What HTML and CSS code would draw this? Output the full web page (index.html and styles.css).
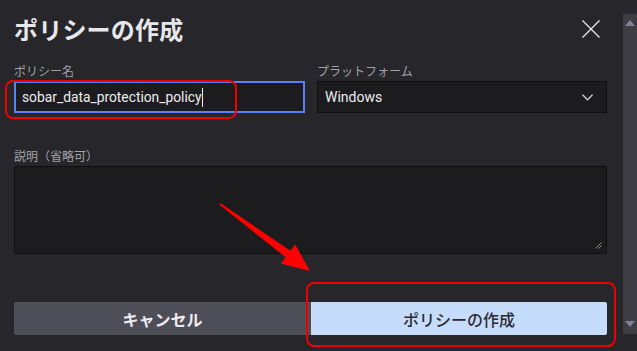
FILE: index.html
```html
<!DOCTYPE html>
<html lang="ja">
<head>
<meta charset="utf-8">
<link rel="stylesheet" href="styles.css">
</head>
<body>
<div class="page">
  <div class="dialog">
    <div class="header">
      <h1 class="title">ポリシーの作成</h1>
      <button class="close" aria-label="閉じる">
        <svg width="18" height="18" viewBox="0 0 18 18"><path d="M0.5 0.5L17.5 17.5M17.5 0.5L0.5 17.5" stroke="#e8e8ea" stroke-width="1.3" fill="none"/></svg>
      </button>
    </div>
    <div class="fields">
      <div class="field">
        <label class="label">ポリシー名</label>
        <div class="input focused"><span>sobar_data_protection_policy</span><span class="caret"></span></div>
      </div>
      <div class="field">
        <label class="label">プラットフォーム</label>
        <div class="input select"><span>Windows</span>
          <svg class="chev" width="11" height="7" viewBox="0 0 11 7"><path d="M0.5 0.8L5.5 5.8L10.5 0.8" stroke="#d0d0d4" stroke-width="1.3" fill="none"/></svg>
        </div>
      </div>
    </div>
    <div class="field desc">
      <label class="label">説明（省略可）</label>
      <div class="textarea">
        <svg class="grip" width="7" height="7" viewBox="0 0 7 7"><path d="M6.5 0.5L0.5 6.5M6.5 3.5L3.5 6.5" stroke="#8a8a90" stroke-width="1" fill="none"/></svg>
      </div>
    </div>
    <div class="actions">
      <button class="btn cancel">キャンセル</button>
      <button class="btn primary">ポリシーの作成</button>
    </div>
  </div>
  <div class="scrollbar">
    <span class="arrow up"></span>
    <span class="arrow down"></span>
  </div>
</div>
<div class="mark mark-input"></div>
<div class="mark mark-button"></div>
<svg class="pointer" width="637" height="351" viewBox="0 0 637 351">
  <polygon points="219.4,204.8 220.6,203.2 290.4,250.8 295.2,244.4 310,271 280.8,263.6 285.6,257.2" fill="#f00"/>
</svg>
</body>
</html>
```
FILE: styles.css
```css
html, body {
  margin: 0;
  padding: 0;
  background: #26262b;
  font-family: "Noto Sans CJK JP", "Noto Sans", sans-serif;
  color: #e6e6e9;
}
.page {
  width: 637px;
  height: 351px;
  display: flex;
  background: #26262b;
  box-sizing: border-box;
}
.dialog {
  width: 623px;
  box-sizing: border-box;
  padding: 0 16px 0 14px;
  display: flex;
  flex-direction: column;
}
.header {
  display: flex;
  align-items: center;
  justify-content: space-between;
  height: 58px;
}
.title {
  margin: -1px 0 0 0;
  font-size: 24px;
  font-weight: 700;
  line-height: 32px;
  color: #e8e8ea;
  letter-spacing: 0.2px;
}
.close {
  background: none;
  border: 0;
  padding: 0;
  margin-right: 7px;
  width: 18px;
  height: 18px;
  display: block;
}
.close svg { display: block; }
.fields {
  display: grid;
  grid-template-columns: 291px 290px;
  column-gap: 12px;
}
.field {
  display: flex;
  flex-direction: column;
}
.label {
  font-size: 12px;
  line-height: 16px;
  color: #a3a3a9;
  margin-top: 5px;
  margin-bottom: 2px;
}
.input {
  height: 32px;
  box-sizing: border-box;
  background: #1c1c1f;
  border: 1px solid #101012;
  display: flex;
  align-items: center;
  padding: 0 7px;
  font-family: Roboto, "Noto Sans CJK JP", sans-serif;
  font-size: 14px;
  color: #ececee;
}
.input.focused {
  border: 2px solid #5b7ff5;
  padding: 0 6px;
  font-size: 13.8px;
}
.caret {
  width: 1px;
  height: 19px;
  background: #f0f0f0;
  margin-left: 0;
}
.select {
  justify-content: space-between;
  padding-right: 13px;
}
.chev { display: block; }
.desc .label {
  margin-top: 35px;
}
.textarea {
  height: 88px;
  box-sizing: border-box;
  background: #1c1c1f;
  border: 1px solid #0f0f11;
  border-radius: 2px;
  display: flex;
  justify-content: flex-end;
  align-items: flex-end;
  padding: 0 4px 4px 0;
}
.grip { display: block; }
.actions {
  display: flex;
  margin-top: 48px;
}
.btn {
  height: 33px;
  border: 0;
  font-family: "Noto Sans CJK JP", sans-serif;
  font-size: 16px;
  font-weight: 700;
  padding: 0;
}
.cancel {
  width: 297px;
  background: #4e4e59;
  color: #ededf0;
  border-radius: 2px 0 0 2px;
}
.primary {
  width: 296px;
  background: #c6dcfb;
  color: #2b2b33;
  font-weight: 500;
  border-radius: 0 2px 2px 0;
}
.scrollbar {
  width: 14px;
  margin-top: 14px;
  height: 320px;
  background: #3d3d43;
  display: flex;
  flex-direction: column;
  justify-content: space-between;
  align-items: center;
  padding: 6px 0 7px;
  box-sizing: border-box;
}
.arrow {
  width: 0;
  height: 0;
  border-left: 5px solid transparent;
  border-right: 5px solid transparent;
}
.arrow.up { border-bottom: 6px solid #80809a; }
.arrow.down { border-top: 6px solid #80809a; }
.mark {
  position: absolute;
  border: 2.5px solid #ee0000;
  border-radius: 8px;
  box-sizing: border-box;
}
.mark-input {
  left: 5px;
  top: 80px;
  width: 232px;
  height: 39px;
}
.mark-button {
  left: 306px;
  top: 282px;
  width: 310px;
  height: 65px;
}
.pointer {
  position: absolute;
  left: 0;
  top: 0;
}
```
